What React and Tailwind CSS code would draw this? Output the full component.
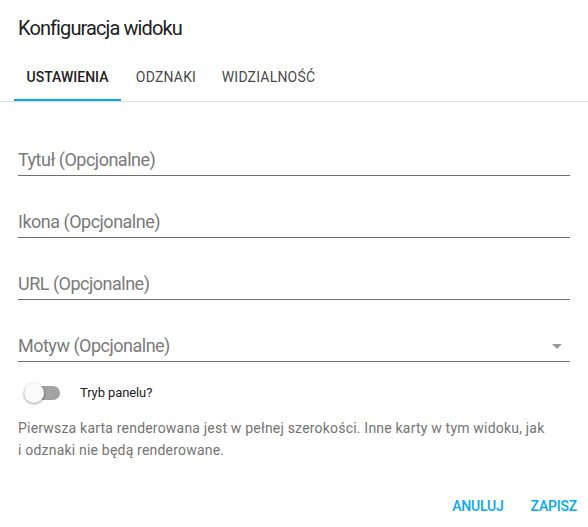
import React from 'react';

const fields = ['Tytuł (Opcjonalne)', 'Ikona (Opcjonalne)', 'URL (Opcjonalne)', 'Motyw (Opcjonalne)'];

function App() {
  return (
    <div className="w-[588px] h-[527px] bg-white font-['Roboto',sans-serif] text-[#212121] overflow-hidden">
      {/* Header */}
      <h2 className="pt-[14px] px-[18px] text-[20px] leading-7 font-normal tracking-[-0.9px]">Konfiguracja widoku</h2>

      {/* Tabs */}
      <div className="mt-[11px] flex h-[49px] border-b border-[#e0e0e0] pl-[14px]">
        <div className="relative w-[107px] h-[48px] flex items-center justify-center text-[14px] font-medium text-[#212121]">
          USTAWIENIA
          <span className="absolute left-0 right-0 bottom-0 h-[2px] bg-[#03a9f4]"></span>
        </div>
        <div className="w-[90px] h-[48px] flex items-center justify-center text-[14px] font-normal tracking-[0.2px] text-[#4a4a4a]">ODZNAKI</div>
        <div className="w-[115px] h-[48px] flex items-center justify-center text-[14px] font-normal tracking-[0.2px] text-[#4a4a4a]">WIDZIALNOŚĆ</div>
      </div>

      {/* Fields */}
      <div className="px-[18px] pt-[12px]">
        {fields.map((label, i) => (
          <div key={label} className="h-[62px] flex items-end border-b border-[#6f6f6f]">
            <div className="flex-1 flex items-center justify-between pb-[3px]">
              <span className="text-[18px] leading-6 tracking-[-0.5px] text-[#7a7a7a]">{label}</span>
              {i === 3 && (
                <svg width="10" height="5" viewBox="0 0 10 5" className="mr-[8px]">
                  <path d="M0 0 L10 0 L5 5 Z" fill="#9a9a9a" />
                </svg>
              )}
            </div>
          </div>
        ))}

        {/* Toggle */}
        <div className="mt-[21px] flex items-center h-[20px]">
          <div className="relative w-[36px] h-[20px] ml-[6px] flex items-center">
            <div className="w-[36px] h-[14px] rounded-full bg-[#a3a3a3]"></div>
            <div className="absolute left-0 top-0 w-[20px] h-[20px] rounded-full bg-[#fafafa] shadow-[0_1px_3px_rgba(0,0,0,0.4)]"></div>
          </div>
          <span className="ml-[20px] text-[13px] tracking-[-0.1px] text-[#212121]">Tryb panelu?</span>
        </div>

        {/* Description */}
        <p className="mt-[14px] text-[14px] leading-[22px] tracking-[0.2px] text-[#737373]">
          Pierwsza karta renderowana jest w pełnej szerokości. Inne karty w tym widoku, jak
          <br />
          i odznaki nie będą renderowane.
        </p>
      </div>

      {/* Actions */}
      <div className="mt-[27px] flex justify-end pr-[3px] gap-[11px]">
        <button className="px-[8px] h-[36px] text-[14px] font-medium text-[#03a9f4] tracking-[-0.2px]">ANULUJ</button>
        <button className="px-[8px] h-[36px] text-[14px] font-medium text-[#03a9f4] tracking-[-0.2px]">ZAPISZ</button>
      </div>
    </div>
  );
}

export default App;
